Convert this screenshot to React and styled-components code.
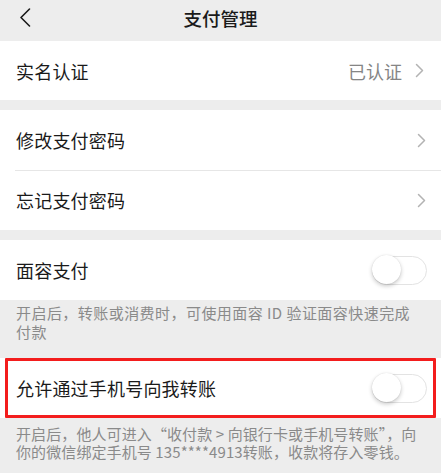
import React from "react";
import styled, { createGlobalStyle } from "styled-components";

const Global = createGlobalStyle`
  html, body { margin: 0; padding: 0; background: #ededed; }
  body { font-family: "Noto Sans CJK SC", "Noto Sans", sans-serif; -webkit-font-smoothing: antialiased; }
  * { box-sizing: border-box; }
`;

const Page = styled.div`
  width: 441px;
  min-height: 473px;
  background: #ededed;
  display: flex;
  flex-direction: column;
`;

const Header = styled.div`
  height: 41px;
  display: grid;
  grid-template-columns: 60px 1fr 60px;
  align-items: center;
  background: #ededed;
`;

const BackButton = styled.div`
  display: flex;
  align-items: center;
  padding-left: 19px;
  height: 100%;
  padding-bottom: 7px;
`;

const Title = styled.div`
  text-align: center;
  font-size: 18.5px;
  font-weight: 500;
  color: #1a1a1a;
  padding-bottom: 6px;
`;

const Group = styled.div`
  background: #fff;
  margin-top: ${(p) => p.$gap || 0}px;
  display: flex;
  flex-direction: column;
`;

const Row = styled.div`
  height: ${(p) => p.$h || 60}px;
  display: flex;
  align-items: center;
  padding: 0 ${(p) => p.$pr || 16}px 0 16px;
  position: relative;
  background: #fff;
  & + &::before {
    content: "";
    position: absolute;
    top: 0;
    left: 15px;
    right: 0;
    height: 1px;
    background: #e6e6e6;
  }
`;

const Label = styled.div`
  flex: 1;
  font-size: 18px;
  color: #1a1a1a;
  letter-spacing: 0.2px;
`;

const Value = styled.div`
  font-size: 18px;
  color: #858585;
  margin-right: 13px;
`;

const Chevron = () => (
  <svg width="9" height="15" viewBox="0 0 9 15" fill="none">
    <path d="M1.5 1.5 L7.5 7.5 L1.5 13.5" stroke="#b3b3b3" strokeWidth="1.5" strokeLinecap="round" strokeLinejoin="round" />
  </svg>
);

const BackIcon = () => (
  <svg width="12" height="19" viewBox="0 0 12 19" fill="none">
    <path d="M10.5 1 L2 9.5 L10.5 18" stroke="#1a1a1a" strokeWidth="1.6" strokeLinecap="round" strokeLinejoin="round" />
  </svg>
);

const Track = styled.div`
  width: 55px;
  height: 29px;
  border-radius: 15px;
  border: 1.5px solid #e3e3e3;
  background: #fff;
  position: relative;
  flex-shrink: 0;
`;

const Knob = styled.div`
  position: absolute;
  left: -1px;
  top: -1.5px;
  width: 29px;
  height: 29px;
  border-radius: 50%;
  background: #fff;
  box-shadow: 0 2px 4px rgba(0, 0, 0, 0.22), 0 0 1px rgba(0, 0, 0, 0.15);
`;

const Toggle = () => (
  <Track>
    <Knob />
  </Track>
);

const Note = styled.div`
  padding: ${(p) => p.$pt}px ${(p) => p.$pr}px ${(p) => p.$pb}px 16px;
  font-size: 15px;
  line-height: ${(p) => p.$lh || 18}px;
  letter-spacing: ${(p) => p.$ls || 0}px;
  color: #8a8a8a;
`;

const Highlight = styled.div`
  position: relative;
  background: #fff;
  &::after {
    content: "";
    position: absolute;
    top: 0;
    bottom: 0;
    left: 5px;
    right: 5px;
    border: 3px solid #f31d1d;
    border-radius: 1px;
    pointer-events: none;
  }
`;

export default function App() {
  return (
    <>
      <Global />
      <Page>
        <Header>
          <BackButton>
            <BackIcon />
          </BackButton>
          <Title>支付管理</Title>
          <div />
        </Header>

        <Group>
          <Row $h={59} $pr={17}>
            <Label>实名认证</Label>
            <Value>已认证</Value>
            <Chevron />
          </Row>
        </Group>

        <Group $gap={10}>
          <Row $pr={15}>
            <Label>修改支付密码</Label>
            <Chevron />
          </Row>
          <Row $pr={15}>
            <Label>忘记支付密码</Label>
            <Chevron />
          </Row>
        </Group>

        <Group $gap={10}>
          <Row $pr={14}>
            <Label>面容支付</Label>
            <Toggle />
          </Row>
        </Group>

        <Note $pt={4} $pb={17} $lh={18.5} $pr={30} $ls={0.45}>
          开启后，转账或消费时，可使用面容 ID 验证面容快速完成付款
        </Note>

        <Highlight>
          <Row $pr={14}>
            <Label>允许通过手机号向我转账</Label>
            <Toggle />
          </Row>
        </Highlight>

        <Note $pt={7} $pb={10} $lh={17.5} $pr={20} $ls={0.1}>
          开启后，他人可进入“收付款 &gt; 向银行卡或手机号转账”，向你的微信绑定手机号 135****4913转账，收款将存入零钱。
        </Note>
      </Page>
    </>
  );
}
